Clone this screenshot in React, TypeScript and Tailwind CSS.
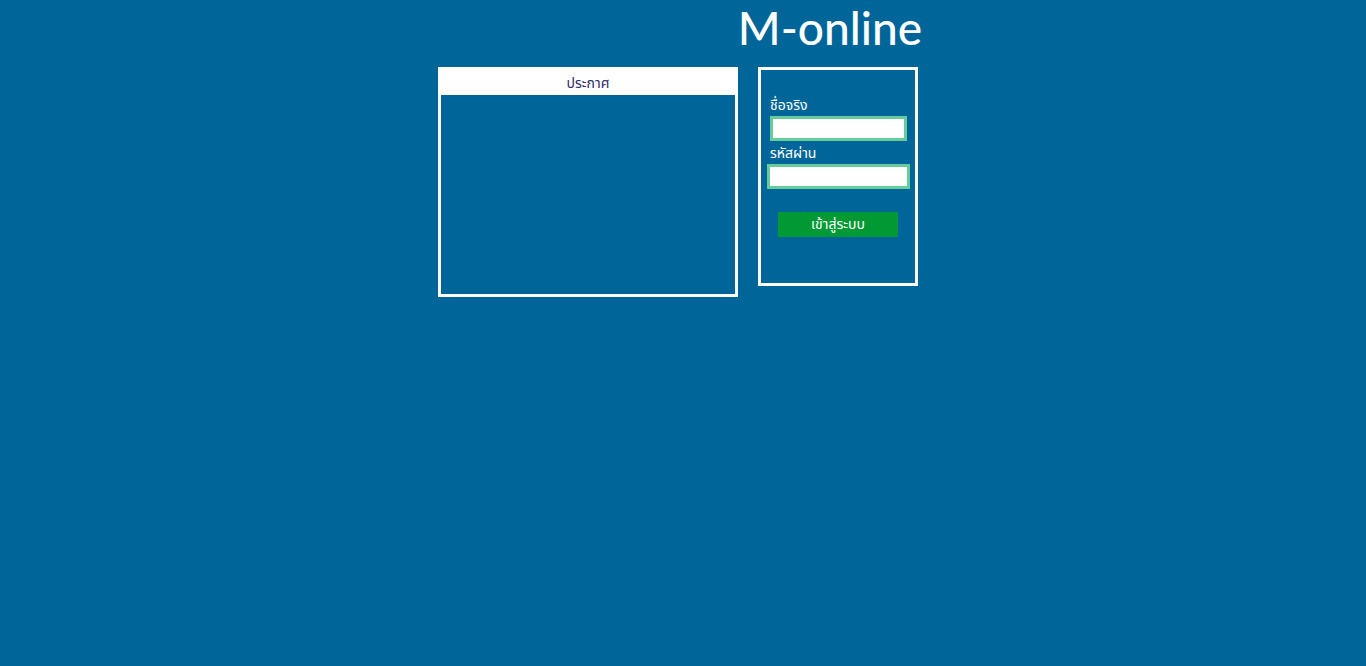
export default function App() {
  return (
    <div className="min-h-[666px] bg-[#006699] font-['Tahoma','Noto_Sans_Thai','Noto_Sans',sans-serif]">
      <div className="mx-auto w-[490px]">
        <h1 className="pr-[6px] text-right font-['Lato',sans-serif] text-[46px] font-medium leading-[56px] text-white">
          M-online
        </h1>
        <div className="mt-[11px] flex items-start gap-[20px]">
          <div className="h-[230px] w-[300px] border-[3px] border-white">
            <div className="h-[25px] bg-white text-center text-[14px] leading-[27px] text-[#2a2a6a]">
              ประกาศ
            </div>
          </div>
          <div className="h-[219px] w-[160px] border-[3px] border-white pt-[26px]">
            <label className="block pl-[9px] text-[14px] leading-[20px] text-white">ชื่อจริง</label>
            <input className="ml-[9px] block h-[25px] w-[137px] border-[3px] border-[#66cc99] bg-white outline-none" />
            <label className="mt-[3px] block pl-[9px] text-[14px] leading-[20px] text-white">รหัสผ่าน</label>
            <input className="ml-[6px] block h-[25px] w-[143px] border-[3px] border-[#66cc99] bg-white outline-none" />
            <button className="mx-auto mt-[23px] block h-[25px] w-[120px] bg-[#009933] text-[14px] leading-[25px] text-white">
              เข้าสู่ระบบ
            </button>
          </div>
        </div>
      </div>
    </div>
  );
}
